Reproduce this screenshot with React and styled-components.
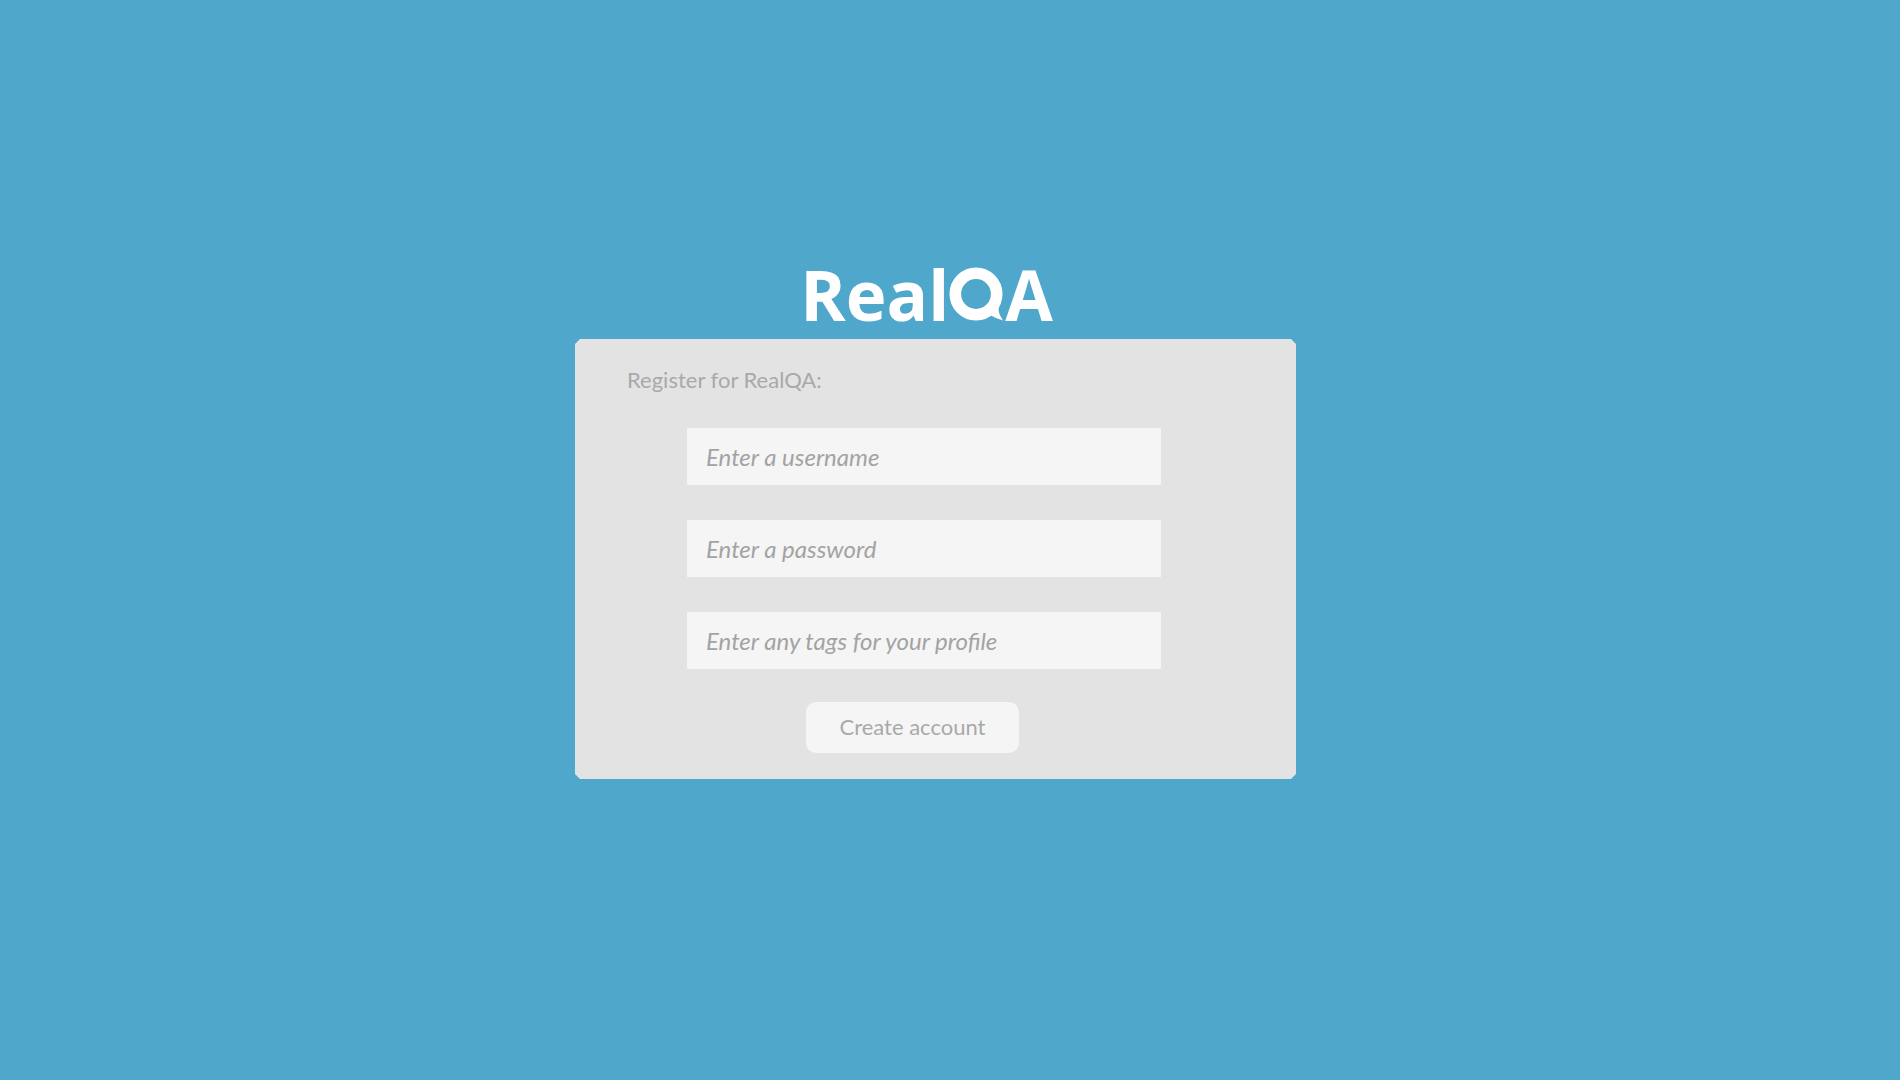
import React from "react";
import styled, { createGlobalStyle } from "styled-components";

const GlobalStyle = createGlobalStyle`
  *, *::before, *::after { box-sizing: border-box; }
  body {
    margin: 0;
    background: #4fa7cb;
    font-family: Lato, "Open Sans", sans-serif;
  }
`;

const Page = styled.main`
  min-height: 100vh;
  display: flex;
  flex-direction: column;
  align-items: center;
  padding: 254px 29px 40px 0;
`;

const Logo = styled.h1`
  display: flex;
  align-items: center;
  margin: 0 0 5px;
  padding-right: 18px;
  color: #ffffff;
  font: bold 69px/80px "Open Sans", "Noto Sans", sans-serif;
`;

const LogoMark = styled.svg`
  width: 54px;
  height: 54px;
  margin-right: 2px;
`;

const Card = styled.form`
  width: 100%;
  max-width: 721px;
  padding: 27px 52px 26px;
  background: #e3e3e3;
  clip-path: polygon(
    5px 0, calc(100% - 5px) 0, 100% 5px, 100% calc(100% - 5px),
    calc(100% - 5px) 100%, 5px 100%, 0 calc(100% - 5px), 0 5px
  );
`;

const Heading = styled.h2`
  margin: 0 0 34px;
  color: #a9a9a9;
  font-size: 22px;
  font-weight: 400;
  line-height: 28px;
`;

const Fields = styled.div`
  display: flex;
  flex-direction: column;
  gap: 35px;
  width: 100%;
  max-width: 474px;
  margin-left: 60px;
`;

const Field = styled.input`
  width: 100%;
  height: 57px;
  padding: 0 19px;
  border: 0;
  border-radius: 0;
  background: #f5f5f5;
  color: #777777;
  font: italic 24px/28px Lato, "Open Sans", sans-serif;

  &::placeholder {
    color: #a3a3a3;
    opacity: 1;
  }
`;

const Actions = styled.div`
  display: flex;
  justify-content: center;
  margin-top: 33px;
  padding-right: 46px;
`;

const SubmitButton = styled.button`
  width: 213px;
  height: 51px;
  padding: 0 0 2px;
  border: 0;
  border-radius: 10px;
  background: #f5f5f5;
  color: #a9a9a9;
  font: 22px/28px Lato, "Open Sans", sans-serif;
  cursor: pointer;
`;

const fields = [
  { name: "username", type: "text", prompt: "Enter a username" },
  { name: "password", type: "password", prompt: "Enter a password" },
  { name: "tags", type: "text", prompt: "Enter any tags for your profile" },
];

export default function App() {
  return (
    <>
      <GlobalStyle />
      <Page>
        <Logo>
          <span>Real</span>
          <LogoMark viewBox="0 0 54 54" role="img" aria-label="Q">
            <circle cx="27" cy="27" r="20.7" fill="none" stroke="#fff" strokeWidth="11.6" />
            <path d="M52 36C49 41 48 44 54 53.5Q48 52 41 48L40 40Z" fill="#fff" />
          </LogoMark>
          <span>A</span>
        </Logo>
        <Card onSubmit={(event) => event.preventDefault()}>
          <Heading>Register for RealQA:</Heading>
          <Fields>
            {fields.map(({ name, type, prompt }) => (
              <Field key={name} name={name} type={type} placeholder={prompt} aria-label={prompt} />
            ))}
          </Fields>
          <Actions>
            <SubmitButton type="submit">Create account</SubmitButton>
          </Actions>
        </Card>
      </Page>
    </>
  );
}
